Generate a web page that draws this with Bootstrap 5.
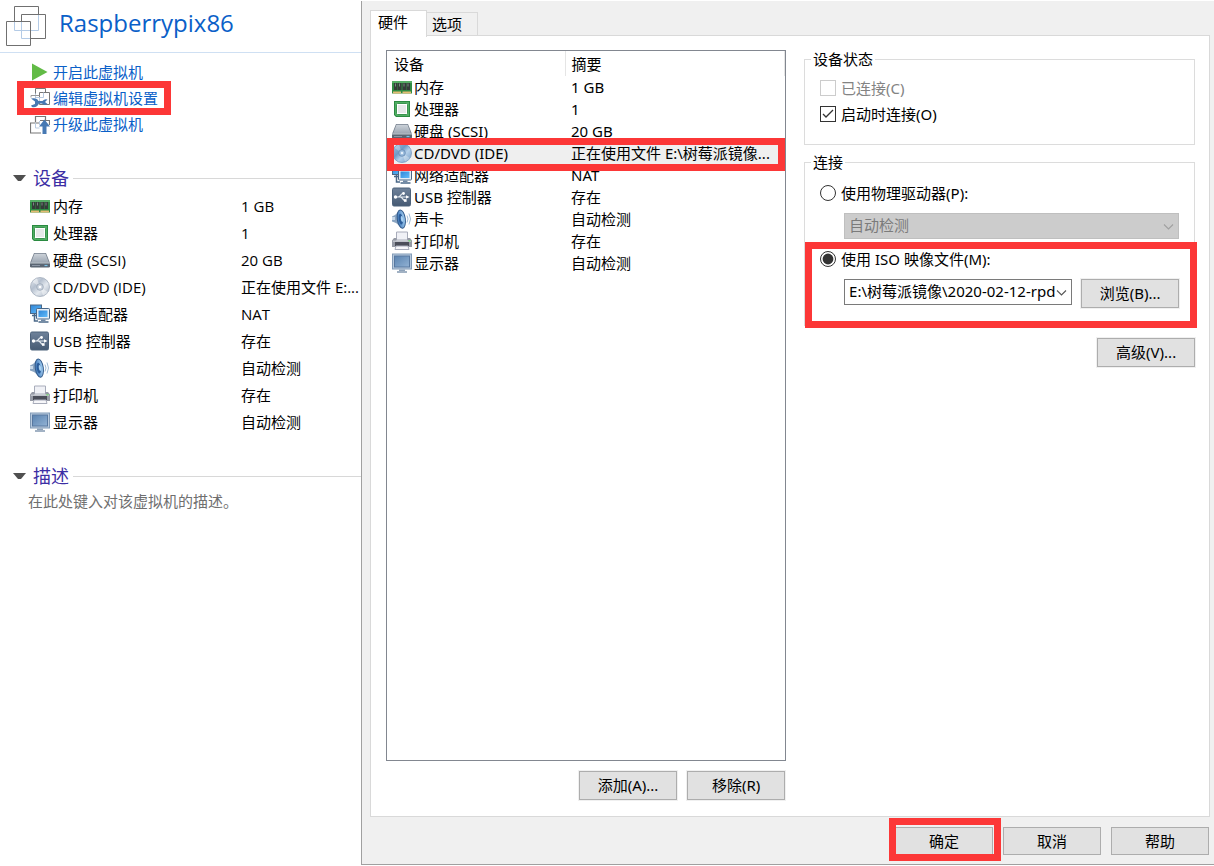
<!DOCTYPE html>
<html lang="zh-CN">
<head>
<meta charset="utf-8">
<meta name="viewport" content="width=device-width, initial-scale=1">
<title>Raspberrypix86</title>
<link href="https://cdn.jsdelivr.net/npm/bootstrap@5.3.0/dist/css/bootstrap.min.css" rel="stylesheet">
<style>
  body { font: 15px/22px "Open Sans", "Noto Sans CJK SC", sans-serif; color: #000; background: #fff; }
  .ico { width: 20px; height: 20px; flex: none; display: block; }

  /* red highlight frames drawn over the content */
  .marked { position: relative; }
  .marked::after, .hw .row-marked td:first-child::after { content: ""; position: absolute; border: 7px solid #fc3737; pointer-events: none; z-index: 2; }

  /* machine summary */
  .summary { flex: 0 0 361px; min-width: 0; }
  .vm-title { height: 53px; border-bottom: 1px solid #cfe0f3; padding: 6px 0 0 6px; gap: 13px; }
  .vm-title h1 { font-size: 24px; line-height: 34px; color: #0a60c8; font-weight: 400; }
  .commands { padding: 6px 0 0 30px; }
  .commands li { height: 26px; }
  .commands a { display: inline-flex; align-items: center; gap: 3px; height: 26px; color: #0a60c8; text-decoration: none; }
  .commands .marked::after { inset: -4px -13px; }
  .section-head { padding-left: 13px; height: 26px; gap: 7px; }
  .section-head h2 { font-size: 18px; line-height: 26px; color: #3c2ea4; font-weight: 400; }
  .section-head hr { border-color: #d8d8d8; opacity: 1; margin-left: -3px; }
  .device-list { width: 100%; table-layout: fixed; margin-top: 1px; }
  .device-list td { height: 27px; padding: 0; white-space: nowrap; }
  .device-list td:first-child { width: 241px; padding-left: 30px; }
  .with-icon { display: flex; align-items: center; gap: 3px; }
  .hint { padding: 1px 0 0 28px; color: #6f6f6f; }

  /* settings dialog */
  .settings { font-family: "Noto Sans", "Noto Sans CJK SC", sans-serif; background: #f0f0f0; border-left: 1px solid #a0a0a0; border-bottom: 1px solid #a0a0a0; margin: 1px 0; padding: 9px 4px 9px 8px; min-width: 0; }
  .settings .nav-tabs { border: 0; height: 25px; align-items: flex-end; }
  .settings .nav-tabs .nav-link { font-size: 15px; line-height: 22px; color: #000; border: 1px solid #d9d9d9; border-radius: 0; background: #f0f0f0; margin: 0; padding: 0 15px 2px 5px; height: 24px; border-left: 0; border-bottom: 0; }
  .settings .nav-tabs .nav-link.active { background: #fff; border-left: 1px solid #d9d9d9; padding: 0 18px 4px 7px; height: 27px; position: relative; margin-bottom: -1px; z-index: 1; }
  .sheet { background: #fff; border: 1px solid #d9d9d9; padding: 14px 14px 16px 15px; display: grid; grid-template-columns: minmax(0, 400fr) minmax(0, 391fr); column-gap: 18px; }
  .listing { border: 1px solid #828790; }
  .hw { width: 100%; table-layout: fixed; }
  .hw th { font-weight: 400; height: 25px; line-height: 20px; padding: 0 0 0 7px; }
  .hw th:first-child { width: 178px; border-right: 1px solid #e5e5e5; }
  .hw th:last-child { border-right: 1px solid #e5e5e5; padding-left: 6px; }
  .hw td { height: 22px; line-height: 20px; padding: 0 0 0 5px; white-space: nowrap; }
  .hw td:last-child { padding: 0 0 0 6px; }
  .hw .with-icon { gap: 2px; }
  .hw .row-marked { position: relative; }
  .hw .row-marked td { background: #efefef; }
  .hw .row-marked td:first-child::after { inset: -4px 0 -7px; }
  .list-actions { gap: 10px; padding: 10px 1px 0 0; }

  .push { font-size: 15px; line-height: 22px; color: #000; background: #e1e1e1; border: 1px solid #adadad; border-radius: 0; width: 98px; height: 29px; padding: 0 0 1px; outline: 1px solid #f0f0f0; }
  .settings footer { padding: 10px 1px 0 0; gap: 10px; }
  .settings footer .push { height: 28px; }
  .settings footer .marked::after { inset: -9px -8px -6px -6px; }

  .group { border: 1px solid #dcdcdc; padding: 0 15px; }
  .group legend { float: none; width: auto; font-size: 15px; line-height: 18px; margin: 0 0 0 -9px; padding: 0 2px; }
  .pick { display: flex; align-items: center; gap: 5px; min-height: 28px; padding: 0; margin: 0; }
  .pick .form-check-input { width: 16px; height: 16px; margin: 0; float: none; border: 1px solid #333; background-color: #fff; box-shadow: none; }
  .pick .form-check-input[type=checkbox] { border-radius: 0; }
  .pick .form-check-input:checked[type=checkbox] { background-size: 16px; background-image: url("data:image/svg+xml,%3Csvg xmlns='http://www.w3.org/2000/svg' viewBox='0 0 16 16'%3E%3Cpath d='M3 8l3 3 7-7' fill='none' stroke='%23333' stroke-width='1.3'/%3E%3C/svg%3E"); }
  .pick .form-check-input:checked[type=radio] { background-size: 16px; background-image: url("data:image/svg+xml,%3Csvg xmlns='http://www.w3.org/2000/svg' viewBox='0 0 16 16'%3E%3Ccircle cx='8' cy='8' r='5.4' fill='%23333'/%3E%3C/svg%3E"); }
  .pick .form-check-input:disabled { border-color: #ccc; opacity: 1; }
  .pick .form-check-input:disabled ~ label { color: #838383; opacity: 1; }
  .combo { font-size: 15px; line-height: 22px; height: 26px; border-radius: 0; border: 1px solid #7a7a7a; color: #000; padding: 0 16px 2px 4px; background-position: right 4px center; background-size: 11px; background-image: url("data:image/svg+xml,%3Csvg xmlns='http://www.w3.org/2000/svg' viewBox='0 0 11 11'%3E%3Cpath d='M1 3.500l4.500 4.500 4.500-4.500' fill='none' stroke='%23555' stroke-width='1.100'/%3E%3C/svg%3E"); }
  .combo:disabled { background-color: #ccc; border-color: #bfbfbf; color: #7b7b7b; background-image: url("data:image/svg+xml,%3Csvg xmlns='http://www.w3.org/2000/svg' viewBox='0 0 11 11'%3E%3Cpath d='M1 3.500l4.500 4.500 4.500-4.500' fill='none' stroke='%23a0a0a0' stroke-width='1.100'/%3E%3C/svg%3E"); }
  .combo-file { flex: 1 1 0; min-width: 0; }
  .indent { padding: 6px 0 0 24px; gap: 9px; }
  .iso { margin-top: 6px; padding-bottom: 17px; }
  .iso::after { inset: -3px -18px -3px -15px; }
</style>
</head>
<body>
<svg width="0" height="0" class="position-absolute" aria-hidden="true">
  <defs>
    <linearGradient id="gMetal" x1="0" y1="0" x2="0" y2="1"><stop offset="0" stop-color="#ccd2d9"/><stop offset="1" stop-color="#9ba5b1"/></linearGradient>
    <linearGradient id="gDisc" x1="0" y1="0" x2="1" y2="1"><stop offset="0" stop-color="#eef1f5"/><stop offset=".35" stop-color="#b4bfce"/><stop offset=".6" stop-color="#e3e8ee"/><stop offset="1" stop-color="#a3afbf"/></linearGradient>
    <linearGradient id="gDiscBlue" x1="0" y1="0" x2="1" y2="1"><stop offset="0" stop-color="#a9c6e4"/><stop offset=".4" stop-color="#6f9ac6"/><stop offset=".6" stop-color="#b5d0ea"/><stop offset="1" stop-color="#6d97c2"/></linearGradient>
    <linearGradient id="gScreen" x1="0" y1="0" x2="1" y2="1"><stop offset="0" stop-color="#5a83b0"/><stop offset="1" stop-color="#92b2d4"/></linearGradient>
    <linearGradient id="gUsb" x1="0" y1="0" x2="0" y2="1"><stop offset="0" stop-color="#6f829a"/><stop offset="1" stop-color="#465a73"/></linearGradient>
    <linearGradient id="gCone" x1="0" y1="0" x2="1" y2="0"><stop offset="0" stop-color="#3a74b8"/><stop offset="1" stop-color="#a5d0f2"/></linearGradient>
    <linearGradient id="gNet" x1="0" y1="0" x2="1" y2="1"><stop offset="0" stop-color="#2f86d8"/><stop offset="1" stop-color="#62bbfa"/></linearGradient>
  </defs>
  <symbol id="i-ram" viewBox="0 0 20 20">
    <path d="M0 4h20v12.500H0z" fill="#2f8a43"/><path d="M0 4h20v2H0z" fill="#57ad67"/>
    <path d="M2 6h3.500v7H2zM6 6h3.500v7H6zM10.500 6H14v7h-3.500zM14.500 6H18v7h-3.500z" fill="#343b39"/>
    <path d="M3 6.500h1v3H3zM7 6.500h1v3H7zM11.500 6.500h1v3h-1zM15.500 6.500h1v3h-1z" fill="#7b8484"/>
    <path d="M1 14.500h8v2H1zM10.500 14.500H19v2h-8.500z" fill="#e3bd74"/>
  </symbol>
  <symbol id="i-cpu" viewBox="0 0 20 20">
    <path d="M2 2h16v16H4l-2-2z" fill="#2a8a40"/><path d="M3 3h14v14H4.500L3 15.500z" fill="#4fae62"/>
    <rect x="4.500" y="4.500" width="11" height="11" rx="1" fill="#fff" stroke="#3c9450"/><rect x="6" y="6" width="8" height="8" fill="#e6e9e9"/>
  </symbol>
  <symbol id="i-disk" viewBox="0 0 20 20">
    <path d="M4 3h12l4 10v4H0v-4z" fill="#77818e"/><path d="M4.500 3.800h11l3.500 9H1z" fill="url(#gMetal)"/>
    <path d="M0 13h20v3q0 1.500-1.500 1.500h-17Q0 17.500 0 16z" fill="#5b6673"/><path d="M0 12.500h20v1H0z" fill="#c3cad1"/>
    <path d="M2 15.500h8" stroke="#8b96a5"/><path d="M14.500 15.500h3" stroke="#7cc3ea" stroke-width="1.200"/>
  </symbol>
  <symbol id="i-cd" viewBox="0 0 20 20">
    <circle cx="10" cy="10" r="9.500" fill="url(#gDisc)" stroke="#a0abba" stroke-width=".8"/>
    <path d="M10 10L2.500 5A9 9 0 0 1 7 1.500zM10 10l8 5a9 9 0 0 1-5 3.600z" fill="#fff" opacity=".45"/>
    <circle cx="10" cy="10" r="3.300" fill="#cbd3de" stroke="#98a4b4" stroke-width=".8"/><circle cx="10" cy="10" r="1.300" fill="#fff"/>
  </symbol>
  <symbol id="i-cdsel" viewBox="0 0 20 20">
    <circle cx="10" cy="10" r="9.500" fill="url(#gDiscBlue)" stroke="#7298c0" stroke-width=".8"/>
    <path d="M10 10L2.500 5A9 9 0 0 1 7 1.500zM10 10l8 5a9 9 0 0 1-5 3.600z" fill="#fff" opacity=".3"/>
    <circle cx="10" cy="10" r="3.300" fill="#98badb" stroke="#6489b2" stroke-width=".8"/><circle cx="10" cy="10" r="1.300" fill="#e4effa"/>
  </symbol>
  <symbol id="i-net" viewBox="0 0 20 20">
    <rect x=".5" y="1" width="11" height="8.500" fill="url(#gNet)" stroke="#4a6888"/>
    <path d="M4.500 10v7H8M2 11.500h4" fill="none" stroke="#4a6888" stroke-width="1.500"/>
    <rect x="6.500" y="4.500" width="13" height="10.500" rx=".8" fill="#e6eef6" stroke="#4a6888"/><rect x="8.500" y="6.500" width="9" height="6.500" fill="url(#gNet)"/>
    <path d="M11 15.500h4.500V17H11z" fill="#6d86a3"/><path d="M8.500 18h10" stroke="#4a6888" stroke-width="1.500"/>
  </symbol>
  <symbol id="i-usb" viewBox="0 0 20 20">
    <rect x=".5" y="1" width="18" height="18" rx="1.500" fill="url(#gUsb)" stroke="#4d627b"/>
    <g fill="none" stroke="#e6ebf1" stroke-width="1.200"><path d="M3 10h12M6 10c3 0 2.500-3.500 5-3.500M8 10c3 0 2.500 3.500 5 3.500"/></g>
    <circle cx="3.500" cy="10" r="1.700" fill="#fff"/><path d="M14 8.200l3.500 1.800-3.500 1.800z" fill="#fff"/><circle cx="11.500" cy="6.500" r="1.400" fill="#fff"/><path d="M12 12.200h2.600v2.600H12z" fill="#fff"/>
  </symbol>
  <symbol id="i-sound" viewBox="0 0 20 20">
    <path d="M0 7.500L3 6l5-5 2 18-6-5-4-1.500z" fill="#89a4c1"/><path d="M0 8h3v3H0z" fill="#c9d9e9"/>
    <g transform="rotate(-8 9.500 10)"><ellipse cx="9.300" cy="10" rx="4" ry="9.200" fill="url(#gCone)" stroke="#345c8c"/><ellipse cx="8.800" cy="10" rx="2" ry="5.500" fill="#2a5c9a"/><ellipse cx="10" cy="10" rx="1.200" ry="3" fill="#a9d2f3"/></g>
    <path d="M15 6.500q2 3.500 0 7M17 4.500q3 5.500 0 11" fill="none" stroke="#a3bdd7"/>
  </symbol>
  <symbol id="i-print" viewBox="0 0 20 20">
    <path d="M4.500 1h11v8h-11z" fill="#f0f1f6" stroke="#a8acba"/>
    <path d="M2 7h2.500v3h11V7H18l2 2.500V16H0V9.500z" fill="#969aa5"/><path d="M1 9.500h18V11H1z" fill="#bfc2ca"/><path d="M3 11h14v4H3z" fill="#4b4e59"/>
    <path d="M16.500 9h2v1.500h-2z" fill="#7ed97a"/><path d="M4 15h12l1 3.500H3z" fill="#f7f7fa" stroke="#a8acba"/>
  </symbol>
  <symbol id="i-display" viewBox="0 0 20 20">
    <rect x=".5" y="1" width="19" height="15" fill="#b8cade" stroke="#829bb7"/><rect x="2.500" y="3" width="15" height="11" fill="url(#gScreen)" stroke="#5878a0"/>
    <path d="M7 16.500h6V18H7z" fill="#8fa3ba"/><path d="M5 19h10" stroke="#8398b0" stroke-width="1.500"/>
  </symbol>
  <symbol id="i-play" viewBox="0 0 20 20"><path d="M2 1.500v17L17.500 10z" fill="#62bb46"/></symbol>
  <symbol id="i-edit" viewBox="0 0 20 20">
    <g fill="#fff" stroke="#777"><path d="M5.500 .5h10v9h-10z"/><path d="M9.500 4.500h10v12h-10z"/></g>
    <path d="M5.500 5.500v4h8v-5M9.500 9v4" fill="none" stroke="#b9cbe0"/><path d="M9.500 7.500H1v2" fill="none" stroke="#999"/>
    <path d="M1 10.500q4-1 6.500 1l1 1.500h4q2-2.500 5-1.500l-2.500 2.500 2.500 2q-3 2-5.500-.5H9q-2 4.500-7 3.500l-1-1.500 4-1.500v-2.500z" fill="#4779b3"/>
  </symbol>
  <symbol id="i-up" viewBox="0 0 20 20">
    <path d="M5.500 8V2.500h10V6M10 6.500h9.500V11M10 9H.5v10H11" fill="none" stroke="#777" stroke-width="1.200"/>
    <path d="M5.500 9v5h4M9.500 7v4" fill="none" stroke="#b9cbe0"/><path d="M14.500 5.500L20 12.500h-3.500V20h-4v-7.500H9z" fill="#4779b3"/>
  </symbol>
  <symbol id="i-vm" viewBox="0 0 40 40">
    <g fill="#fff" stroke="#707070"><path d="M8.500 .5h24v24h-24z"/><path d="M15.500 8.500h24v24h-24z"/><path d="M.5 15.500h24v24H.5z"/></g>
    <path d="M8.500 16v8.500h7M15.500 16v16.500h8.500M15.500 24.500H24M25 24.500h7.500V9" fill="none" stroke="#b4cbe6"/>
  </symbol>
</svg>

<div class="d-flex min-vh-100">
  <aside class="summary overflow-hidden">
    <header class="vm-title d-flex align-items-start">
      <svg width="40" height="40" aria-hidden="true"><use href="#i-vm"/></svg>
      <h1 class="m-0">Raspberrypix86</h1>
    </header>
    <ul class="commands list-unstyled m-0">
      <li><a href="#"><svg class="ico"><use href="#i-play"/></svg>开启此虚拟机</a></li>
      <li><a href="#" class="marked"><svg class="ico"><use href="#i-edit"/></svg>编辑虚拟机设置</a></li>
      <li><a href="#"><svg class="ico"><use href="#i-up"/></svg>升级此虚拟机</a></li>
    </ul>
    <section class="pt-4 mt-1">
      <div class="section-head d-flex align-items-center">
        <svg width="13" height="8" aria-hidden="true"><path d="M0 1h13L8 7H5z" fill="#505050"/></svg>
        <h2 class="m-0">设备</h2><hr class="flex-grow-1 my-0">
      </div>
      <table class="device-list">
        <tr><td><div class="with-icon"><svg class="ico"><use href="#i-ram"/></svg>内存</div></td><td>1 GB</td></tr>
        <tr><td><div class="with-icon"><svg class="ico"><use href="#i-cpu"/></svg>处理器</div></td><td>1</td></tr>
        <tr><td><div class="with-icon"><svg class="ico"><use href="#i-disk"/></svg>硬盘 (SCSI)</div></td><td>20 GB</td></tr>
        <tr><td><div class="with-icon"><svg class="ico"><use href="#i-cd"/></svg>CD/DVD (IDE)</div></td><td>正在使用文件 E:...</td></tr>
        <tr><td><div class="with-icon"><svg class="ico"><use href="#i-net"/></svg>网络适配器</div></td><td>NAT</td></tr>
        <tr><td><div class="with-icon"><svg class="ico"><use href="#i-usb"/></svg>USB 控制器</div></td><td>存在</td></tr>
        <tr><td><div class="with-icon"><svg class="ico"><use href="#i-sound"/></svg>声卡</div></td><td>自动检测</td></tr>
        <tr><td><div class="with-icon"><svg class="ico"><use href="#i-print"/></svg>打印机</div></td><td>存在</td></tr>
        <tr><td><div class="with-icon"><svg class="ico"><use href="#i-display"/></svg>显示器</div></td><td>自动检测</td></tr>
      </table>
    </section>
    <section class="pt-4 mt-1">
      <div class="section-head d-flex align-items-center">
        <svg width="13" height="8" aria-hidden="true"><path d="M0 1h13L8 7H5z" fill="#505050"/></svg>
        <h2 class="m-0">描述</h2><hr class="flex-grow-1 my-0">
      </div>
      <p class="hint m-0">在此处键入对该虚拟机的描述。</p>
    </section>
  </aside>

  <main class="settings flex-grow-1 d-flex flex-column">
    <ul class="nav nav-tabs">
      <li class="nav-item"><button type="button" class="nav-link active">硬件</button></li>
      <li class="nav-item"><button type="button" class="nav-link">选项</button></li>
    </ul>
    <div class="sheet flex-grow-1">
      <div class="d-flex flex-column">
        <div class="listing flex-grow-1">
          <table class="hw">
            <thead><tr><th>设备</th><th>摘要</th></tr></thead>
            <tbody>
              <tr><td><div class="with-icon"><svg class="ico"><use href="#i-ram"/></svg>内存</div></td><td>1 GB</td></tr>
              <tr><td><div class="with-icon"><svg class="ico"><use href="#i-cpu"/></svg>处理器</div></td><td>1</td></tr>
              <tr><td><div class="with-icon"><svg class="ico"><use href="#i-disk"/></svg>硬盘 (SCSI)</div></td><td>20 GB</td></tr>
              <tr class="row-marked"><td><div class="with-icon"><svg class="ico"><use href="#i-cdsel"/></svg>CD/DVD (IDE)</div></td><td>正在使用文件 E:\树莓派镜像...</td></tr>
              <tr><td><div class="with-icon"><svg class="ico"><use href="#i-net"/></svg>网络适配器</div></td><td>NAT</td></tr>
              <tr><td><div class="with-icon"><svg class="ico"><use href="#i-usb"/></svg>USB 控制器</div></td><td>存在</td></tr>
              <tr><td><div class="with-icon"><svg class="ico"><use href="#i-sound"/></svg>声卡</div></td><td>自动检测</td></tr>
              <tr><td><div class="with-icon"><svg class="ico"><use href="#i-print"/></svg>打印机</div></td><td>存在</td></tr>
              <tr><td><div class="with-icon"><svg class="ico"><use href="#i-display"/></svg>显示器</div></td><td>自动检测</td></tr>
            </tbody>
          </table>
        </div>
        <div class="list-actions d-flex justify-content-end">
          <button type="button" class="btn push">添加(A)...</button>
          <button type="button" class="btn push">移除(R)</button>
        </div>
      </div>

      <div>
        <fieldset class="group pb-3">
          <legend>设备状态</legend>
          <div class="form-check pick mt-1 pt-1"><input class="form-check-input" type="checkbox" id="on" disabled><label for="on">已连接(C)</label></div>
          <div class="form-check pick"><input class="form-check-input" type="checkbox" id="boot" checked><label for="boot">启动时连接(O)</label></div>
        </fieldset>
        <fieldset class="group mt-2">
          <legend>连接</legend>
          <div class="form-check pick mt-2"><input class="form-check-input" type="radio" name="src" id="phys"><label for="phys">使用物理驱动器(P):</label></div>
          <div class="indent d-flex">
            <select class="form-select combo" disabled aria-label="物理驱动器"><option>自动检测</option></select>
          </div>
          <div class="iso marked">
            <div class="form-check pick"><input class="form-check-input" type="radio" name="src" id="iso" checked><label for="iso">使用 ISO 映像文件(M):</label></div>
            <div class="indent d-flex">
              <select class="form-select combo combo-file" aria-label="映像文件"><option>E:\树莓派镜像\2020-02-12-rpd</option></select>
              <button type="button" class="btn push flex-shrink-0">浏览(B)...</button>
            </div>
          </div>
        </fieldset>
        <div class="d-flex justify-content-end pt-2 mt-1"><button type="button" class="btn push">高级(V)...</button></div>
      </div>
    </div>
    <footer class="d-flex justify-content-end">
      <span class="marked d-flex"><button type="button" class="btn push">确定</button></span>
      <button type="button" class="btn push">取消</button>
      <button type="button" class="btn push">帮助</button>
    </footer>
  </main>
</div>
<script src="https://cdn.jsdelivr.net/npm/bootstrap@5.3.0/dist/js/bootstrap.bundle.min.js"></script>
</body>
</html>
